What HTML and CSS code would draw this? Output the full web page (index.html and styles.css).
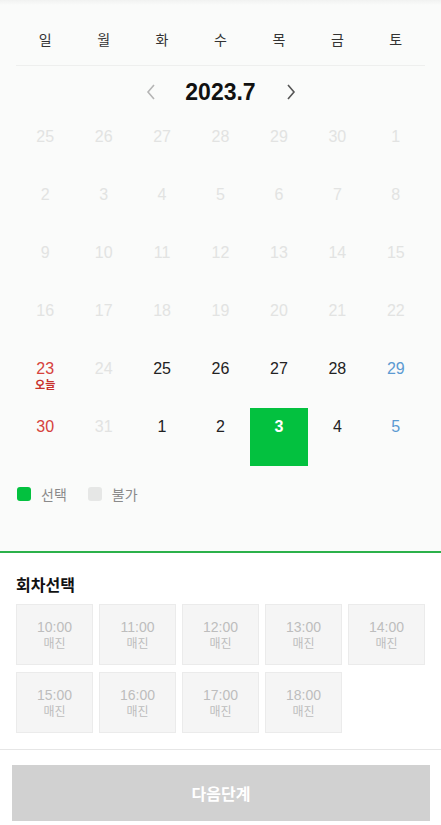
FILE: index.html
```html
<!DOCTYPE html>
<html lang="ko">
<head>
<meta charset="utf-8">
<link rel="stylesheet" href="styles.css">
</head>
<body>
<div class="calendar">
  <div class="weekdays">
    <span>일</span><span>월</span><span>화</span><span>수</span><span>목</span><span>금</span><span>토</span>
  </div>
  <div class="month">
    <svg class="arrow" width="12" height="18" viewBox="0 0 12 18"><path d="M9 2 L3 9 L9 16" fill="none" stroke="#b5b5b5" stroke-width="1.6"/></svg>
    <span class="title">2023.7</span>
    <svg class="arrow" width="12" height="18" viewBox="0 0 12 18"><path d="M3 2 L9 9 L3 16" fill="none" stroke="#555" stroke-width="1.6"/></svg>
  </div>
  <div class="days">
    <div class="d off">25</div><div class="d off">26</div><div class="d off">27</div><div class="d off">28</div><div class="d off">29</div><div class="d off">30</div><div class="d off">1</div>
    <div class="d off">2</div><div class="d off">3</div><div class="d off">4</div><div class="d off">5</div><div class="d off">6</div><div class="d off">7</div><div class="d off">8</div>
    <div class="d off">9</div><div class="d off">10</div><div class="d off">11</div><div class="d off">12</div><div class="d off">13</div><div class="d off">14</div><div class="d off">15</div>
    <div class="d off">16</div><div class="d off">17</div><div class="d off">18</div><div class="d off">19</div><div class="d off">20</div><div class="d off">21</div><div class="d off">22</div>
    <div class="d sun">23<span class="today">오늘</span></div><div class="d off">24</div><div class="d">25</div><div class="d">26</div><div class="d">27</div><div class="d">28</div><div class="d sat">29</div>
    <div class="d sun">30</div><div class="d off">31</div><div class="d">1</div><div class="d">2</div><div class="d sel">3</div><div class="d">4</div><div class="d sat">5</div>
  </div>
  <div class="legend">
    <span class="sw green"></span><span class="lt">선택</span>
    <span class="sw gray"></span><span class="lt">불가</span>
  </div>
</div>
<div class="session">
  <h2 class="stitle">회차선택</h2>
  <div class="slots">
    <div class="slot"><span class="t">10:00</span><span class="s">매진</span></div>
    <div class="slot"><span class="t">11:00</span><span class="s">매진</span></div>
    <div class="slot"><span class="t">12:00</span><span class="s">매진</span></div>
    <div class="slot"><span class="t">13:00</span><span class="s">매진</span></div>
    <div class="slot"><span class="t">14:00</span><span class="s">매진</span></div>
    <div class="slot"><span class="t">15:00</span><span class="s">매진</span></div>
    <div class="slot"><span class="t">16:00</span><span class="s">매진</span></div>
    <div class="slot"><span class="t">17:00</span><span class="s">매진</span></div>
    <div class="slot"><span class="t">18:00</span><span class="s">매진</span></div>
  </div>
</div>
<div class="footer">
  <button class="next">다음단계</button>
</div>
</body>
</html>
```
FILE: styles.css
```css
* { box-sizing: border-box; }
html, body { margin: 0; padding: 0; background: #fff; }
body {
  font-family: "Liberation Sans", Arial, "Noto Sans CJK KR", sans-serif;
  color: #222;
  width: 441px;
}
.calendar {
  background: linear-gradient(#f1f2f1 0, #fafbfa 5px) #fafbfa;
  padding: 0 16px;
  height: 553px;
  border-bottom: 2px solid #2cb14a;
}
.weekdays {
  display: grid;
  grid-template-columns: repeat(7, 1fr);
  padding-top: 30px;
  padding-bottom: 15px;
  line-height: 20px;
  font-size: 14px;
  color: #333;
  text-align: center;
  border-bottom: 1px solid #eeefee;
}
.month {
  height: 52px;
  display: flex;
  align-items: center;
  justify-content: center;
  gap: 0;
}
.month .arrow { display: block; }
.month .title {
  font-size: 23px;
  font-weight: bold;
  color: #111;
  width: 128px;
  text-align: center;
}
.days {
  display: grid;
  grid-template-columns: repeat(7, 1fr);
  grid-auto-rows: 58px;
}
.d {
  display: flex;
  flex-direction: column;
  align-items: center;
  padding-top: 9px;
  font-size: 16px;
  line-height: 20px;
  color: #222;
}
.d.off { color: #e2e3e2; }
.d.sun { color: #d6423c; }
.d.sat { color: #5b9ad2; }
.d.sel { background: #03c13f; color: #fff; font-weight: bold; }
.today {
  font-size: 11px;
  line-height: 12px;
  font-weight: bold;
  color: #c8312b;
}
.legend {
  display: flex;
  align-items: center;
  margin-top: 18px;
  height: 20px;
  padding-left: 1px;
}
.sw {
  width: 14px;
  height: 14px;
  border-radius: 3px;
  margin-right: 10px;
}
.sw.green { background: #03c13f; }
.sw.gray { background: #e6e7e6; }
.lt {
  font-size: 14px;
  color: #8a8a8a;
  margin-right: 21px;
}
.session {
  padding: 22px 16px 16px;
  border-bottom: 1px solid #e6e6e6;
}
.stitle {
  margin: 0 0 7px;
  font-size: 16px;
  line-height: 22px;
  font-weight: bold;
  color: #111;
}
.slots {
  display: grid;
  grid-template-columns: repeat(5, 77px);
  column-gap: 6px;
  row-gap: 7px;
}
.slot {
  height: 61px;
  background: #f5f5f5;
  border: 1px solid #ebebeb;
  display: flex;
  flex-direction: column;
  align-items: center;
  padding-top: 14px;
  color: #bdbdbd;
}
.slot .t { font-size: 14px; line-height: 17px; }
.slot .s { font-size: 12px; line-height: 17px; }
.footer {
  padding: 15px 11px 0 12px;
}
.next {
  display: block;
  width: 418px;
  height: 56px;
  border: none;
  background: #d1d1d1;
  color: #fff;
  font-family: "Liberation Sans", Arial, "Noto Sans CJK KR", sans-serif;
  font-size: 16px;
  font-weight: bold;
}
```
